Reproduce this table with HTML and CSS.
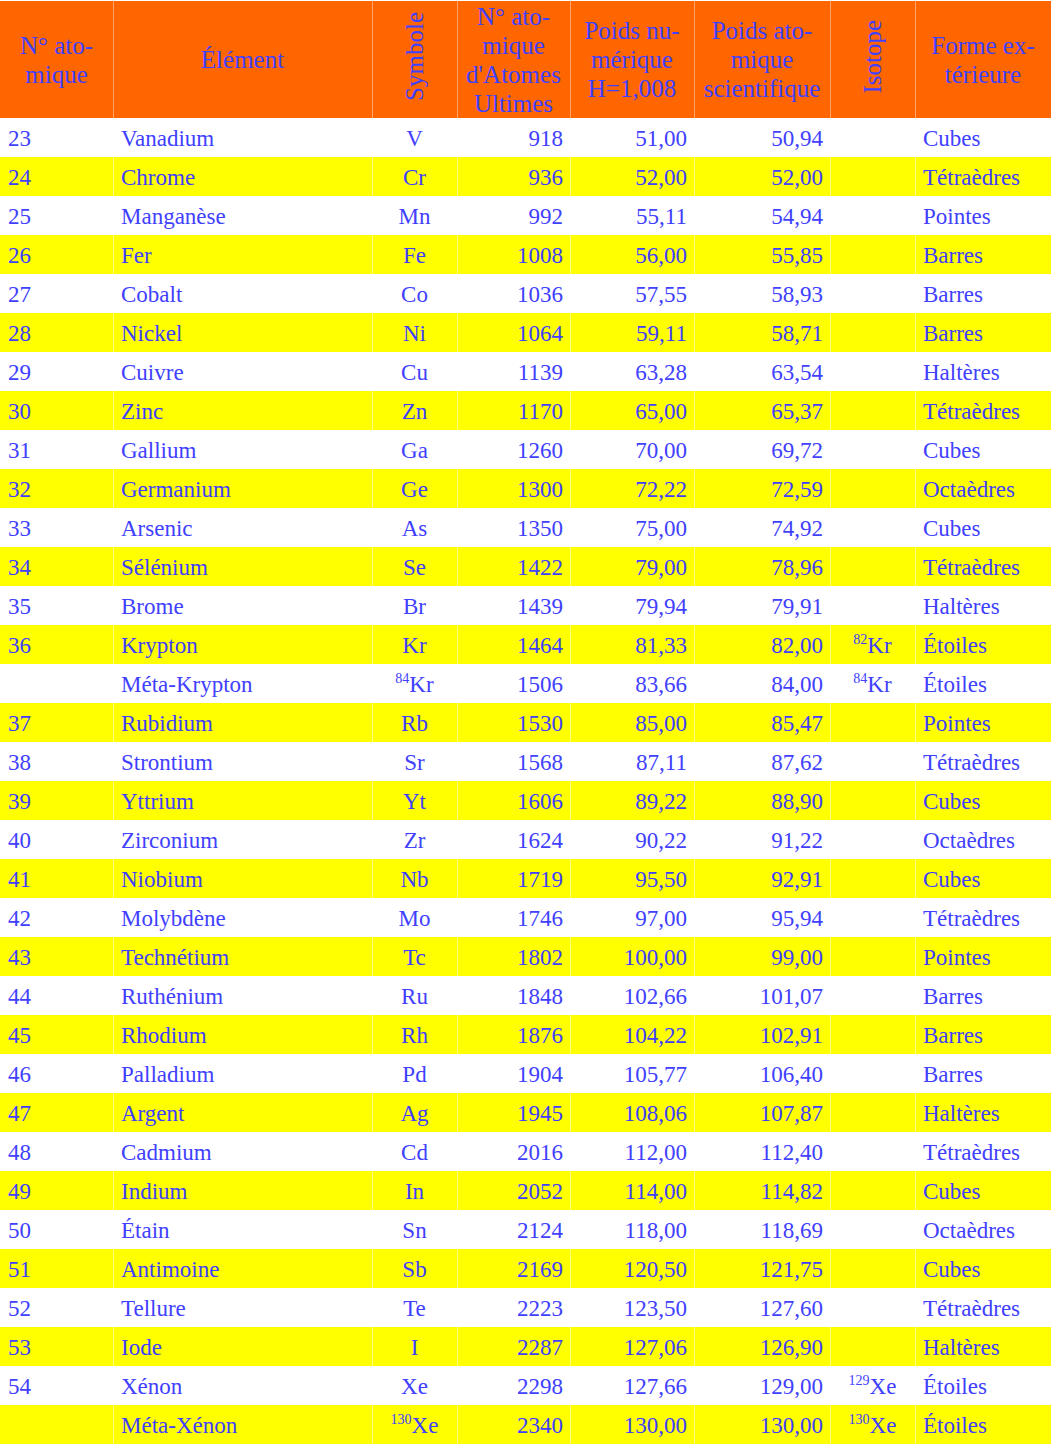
FILE: index.html
```html
<!DOCTYPE html>
<html lang="fr">
<head>
<meta charset="utf-8">
<title>Tableau des éléments</title>
<link rel="stylesheet" href="styles.css">
</head>
<body>
<table class="elements">
<colgroup>
<col class="c1"><col class="c2"><col class="c3"><col class="c4"><col class="c5"><col class="c6"><col class="c7"><col class="c8">
</colgroup>
<thead>
<tr>
<th>N° ato-<br>mique</th>
<th>Élément</th>
<th><span class="vert">Symbole</span></th>
<th>N° ato-<br>mique<br>d'Atomes<br>Ultimes</th>
<th>Poids nu-<br>mérique<br>H=1,008</th>
<th>Poids ato-<br>mique<br>scientifique</th>
<th><span class="vert">Isotope</span></th>
<th>Forme ex-<br>térieure</th>
</tr>
</thead>
<tbody>
<tr><td>23</td><td>Vanadium</td><td>V</td><td>918</td><td>51,00</td><td>50,94</td><td></td><td>Cubes</td></tr>
<tr><td>24</td><td>Chrome</td><td>Cr</td><td>936</td><td>52,00</td><td>52,00</td><td></td><td>Tétraèdres</td></tr>
<tr><td>25</td><td>Manganèse</td><td>Mn</td><td>992</td><td>55,11</td><td>54,94</td><td></td><td>Pointes</td></tr>
<tr><td>26</td><td>Fer</td><td>Fe</td><td>1008</td><td>56,00</td><td>55,85</td><td></td><td>Barres</td></tr>
<tr><td>27</td><td>Cobalt</td><td>Co</td><td>1036</td><td>57,55</td><td>58,93</td><td></td><td>Barres</td></tr>
<tr><td>28</td><td>Nickel</td><td>Ni</td><td>1064</td><td>59,11</td><td>58,71</td><td></td><td>Barres</td></tr>
<tr><td>29</td><td>Cuivre</td><td>Cu</td><td>1139</td><td>63,28</td><td>63,54</td><td></td><td>Haltères</td></tr>
<tr><td>30</td><td>Zinc</td><td>Zn</td><td>1170</td><td>65,00</td><td>65,37</td><td></td><td>Tétraèdres</td></tr>
<tr><td>31</td><td>Gallium</td><td>Ga</td><td>1260</td><td>70,00</td><td>69,72</td><td></td><td>Cubes</td></tr>
<tr><td>32</td><td>Germanium</td><td>Ge</td><td>1300</td><td>72,22</td><td>72,59</td><td></td><td>Octaèdres</td></tr>
<tr><td>33</td><td>Arsenic</td><td>As</td><td>1350</td><td>75,00</td><td>74,92</td><td></td><td>Cubes</td></tr>
<tr><td>34</td><td>Sélénium</td><td>Se</td><td>1422</td><td>79,00</td><td>78,96</td><td></td><td>Tétraèdres</td></tr>
<tr><td>35</td><td>Brome</td><td>Br</td><td>1439</td><td>79,94</td><td>79,91</td><td></td><td>Haltères</td></tr>
<tr><td>36</td><td>Krypton</td><td>Kr</td><td>1464</td><td>81,33</td><td>82,00</td><td><sup>82</sup>Kr</td><td>Étoiles</td></tr>
<tr><td></td><td>Méta-Krypton</td><td><sup>84</sup>Kr</td><td>1506</td><td>83,66</td><td>84,00</td><td><sup>84</sup>Kr</td><td>Étoiles</td></tr>
<tr><td>37</td><td>Rubidium</td><td>Rb</td><td>1530</td><td>85,00</td><td>85,47</td><td></td><td>Pointes</td></tr>
<tr><td>38</td><td>Strontium</td><td>Sr</td><td>1568</td><td>87,11</td><td>87,62</td><td></td><td>Tétraèdres</td></tr>
<tr><td>39</td><td>Yttrium</td><td>Yt</td><td>1606</td><td>89,22</td><td>88,90</td><td></td><td>Cubes</td></tr>
<tr><td>40</td><td>Zirconium</td><td>Zr</td><td>1624</td><td>90,22</td><td>91,22</td><td></td><td>Octaèdres</td></tr>
<tr><td>41</td><td>Niobium</td><td>Nb</td><td>1719</td><td>95,50</td><td>92,91</td><td></td><td>Cubes</td></tr>
<tr><td>42</td><td>Molybdène</td><td>Mo</td><td>1746</td><td>97,00</td><td>95,94</td><td></td><td>Tétraèdres</td></tr>
<tr><td>43</td><td>Technétium</td><td>Tc</td><td>1802</td><td>100,00</td><td>99,00</td><td></td><td>Pointes</td></tr>
<tr><td>44</td><td>Ruthénium</td><td>Ru</td><td>1848</td><td>102,66</td><td>101,07</td><td></td><td>Barres</td></tr>
<tr><td>45</td><td>Rhodium</td><td>Rh</td><td>1876</td><td>104,22</td><td>102,91</td><td></td><td>Barres</td></tr>
<tr><td>46</td><td>Palladium</td><td>Pd</td><td>1904</td><td>105,77</td><td>106,40</td><td></td><td>Barres</td></tr>
<tr><td>47</td><td>Argent</td><td>Ag</td><td>1945</td><td>108,06</td><td>107,87</td><td></td><td>Haltères</td></tr>
<tr><td>48</td><td>Cadmium</td><td>Cd</td><td>2016</td><td>112,00</td><td>112,40</td><td></td><td>Tétraèdres</td></tr>
<tr><td>49</td><td>Indium</td><td>In</td><td>2052</td><td>114,00</td><td>114,82</td><td></td><td>Cubes</td></tr>
<tr><td>50</td><td>Étain</td><td>Sn</td><td>2124</td><td>118,00</td><td>118,69</td><td></td><td>Octaèdres</td></tr>
<tr><td>51</td><td>Antimoine</td><td>Sb</td><td>2169</td><td>120,50</td><td>121,75</td><td></td><td>Cubes</td></tr>
<tr><td>52</td><td>Tellure</td><td>Te</td><td>2223</td><td>123,50</td><td>127,60</td><td></td><td>Tétraèdres</td></tr>
<tr><td>53</td><td>Iode</td><td>I</td><td>2287</td><td>127,06</td><td>126,90</td><td></td><td>Haltères</td></tr>
<tr><td>54</td><td>Xénon</td><td>Xe</td><td>2298</td><td>127,66</td><td>129,00</td><td><sup>129</sup>Xe</td><td>Étoiles</td></tr>
<tr><td></td><td>Méta-Xénon</td><td><sup>130</sup>Xe</td><td>2340</td><td>130,00</td><td>130,00</td><td><sup>130</sup>Xe</td><td>Étoiles</td></tr>
</tbody>
</table>
</body>
</html>
```
FILE: styles.css
```css
html, body {
  margin: 0;
  padding: 0;
  background: #ffffff;
}

.elements {
  border-collapse: separate;
  border-spacing: 0;
  table-layout: fixed;
  width: 1051px;
  margin-top: 1px;
  font-family: "Liberation Serif", "Times New Roman", serif;
  font-size: 23px;
  color: #4040ff;
}

.c1 { width: 113px; }
.c2 { width: 259px; }
.c3 { width: 85px; }
.c4 { width: 113px; }
.c5 { width: 124px; }
.c6 { width: 136px; }
.c7 { width: 85px; }
.c8 { width: 136px; }

.elements th {
  background: #ff6600;
  height: 117px;
  padding: 0;
  font-size: 25px;
  font-weight: normal;
  line-height: 29px;
  text-align: center;
  vertical-align: middle;
  box-shadow: inset 1px 0 0 rgba(255, 255, 255, 0.4);
}

.elements th:first-child,
.elements td:first-child {
  box-shadow: none;
}

.vert {
  display: inline-block;
  writing-mode: vertical-rl;
  transform: rotate(180deg);
  line-height: 29px;
}

.elements td {
  height: 37px;
  padding: 2px 8px 0;
  line-height: 37px;
  white-space: nowrap;
  vertical-align: middle;
  box-shadow: inset 1px 0 0 rgba(255, 255, 255, 0.5);
}

.elements tbody tr:nth-child(even) td {
  background: #ffff00;
}

.elements td:nth-child(3),
.elements td:nth-child(7) {
  text-align: center;
  padding: 2px 0 0;
}

.elements td:nth-child(4),
.elements td:nth-child(5),
.elements td:nth-child(6) {
  text-align: right;
  padding: 2px 7px 0 0;
}

.elements sup {
  font-size: 14px;
  line-height: 0;
  vertical-align: 9px;
}
```
